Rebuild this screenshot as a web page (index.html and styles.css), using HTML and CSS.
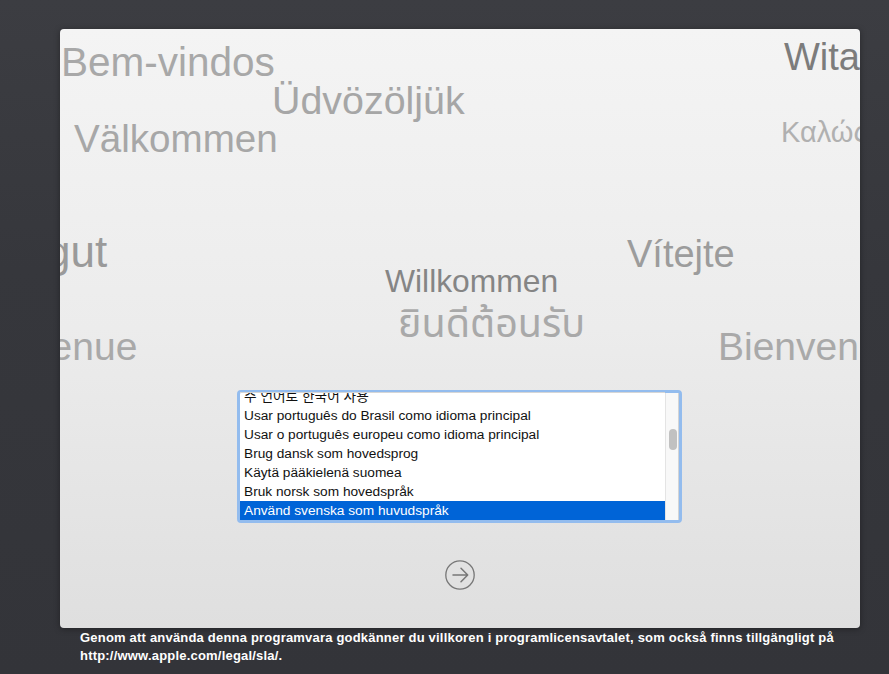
FILE: index.html
```html
<!DOCTYPE html>
<html lang="sv">
<head>
<meta charset="utf-8">
<title>Välkommen</title>
<link rel="stylesheet" href="styles.css">
</head>
<body>
<div class="screen">
  <main class="panel">
    <div class="greetings" aria-hidden="true">
      <span class="word w-bem">Bem-vindos</span>
      <span class="word w-udv">Üdvözöljük</span>
      <span class="word w-val">Välkommen</span>
      <span class="word w-wita">Wita</span>
      <span class="word w-kalo">Καλώς ορίσατε</span>
      <span class="word w-gut">gut</span>
      <span class="word w-bienL">Bienvenue</span>
      <span class="word w-vit">Vítejte</span>
      <span class="word w-bienR">Bienvenido</span>
      <span class="word w-will">Willkommen</span>
      <span class="word w-thai">ยินดีต้อนรับ</span>
    </div>

    <div class="listbox">
      <div class="list">
        <ul class="rows">
          <li class="row">주 언어로 한국어 사용</li>
          <li class="row">Usar português do Brasil como idioma principal</li>
          <li class="row">Usar o português europeu como idioma principal</li>
          <li class="row">Brug dansk som hovedsprog</li>
          <li class="row">Käytä pääkielenä suomea</li>
          <li class="row">Bruk norsk som hovedspråk</li>
          <li class="row selected">Använd svenska som huvudspråk</li>
        </ul>
      </div>
      <div class="scrollbar"><div class="thumb"></div></div>
    </div>

    <button class="next" type="button" aria-label="Fortsätt">
      <svg width="30" height="30" viewBox="0 0 30 30">
        <circle cx="15" cy="15" r="14.2" fill="none" stroke="#777" stroke-width="1.3"/>
        <path d="M8 15 H22.5 M16 8.3 L22.7 15 L16 21.7" fill="none" stroke="#777" stroke-width="1.5" stroke-linecap="round" stroke-linejoin="round"/>
      </svg>
    </button>
  </main>

  <p class="legal">Genom att använda denna programvara godkänner du villkoren i programlicensavtalet, som också finns tillgängligt på http://www.apple.com/legal/sla/.</p>
</div>
</body>
</html>
```

FILE: styles.css
```css
html, body {
  margin: 0;
  padding: 0;
}

body {
  width: 889px;
  height: 674px;
  overflow: hidden;
  background: linear-gradient(180deg, #3c3d42 0%, #36373c 40%, #333439 100%);
  font-family: "Liberation Sans", Arial, sans-serif;
}

.screen {
  padding: 29px 0 0 60px;
}

.panel {
  position: relative;
  width: 800px;
  height: 599px;
  box-sizing: border-box;
  border-radius: 4px;
  overflow: hidden;
  background: linear-gradient(180deg, #f4f4f4 0%, #ececec 50%, #dfdfdf 100%);
  box-shadow: 0 1px 6px rgba(0, 0, 0, 0.35);
  display: flex;
  flex-direction: column;
  align-items: center;
  padding-top: 361px;
}

/* free canvas of greetings */
.greetings {
  position: absolute;
  inset: 0;
}

.word {
  position: absolute;
  line-height: 1;
  white-space: nowrap;
  color: #aaaaaa;
  font-family: "Liberation Sans", Arial, sans-serif;
}

.w-bem   { left: 1px;    top: 13px;  font-size: 40.5px; color: #a8a8a8; }
.w-udv   { left: 212px;  top: 52px;  font-size: 39.4px; color: #a6a6a6; }
.w-val   { left: 14px;   top: 91px;  font-size: 38.6px; color: #a7a7a7; }
.w-wita  { left: 724px;  top: 9px;   font-size: 38px;   color: #7c7c7c; }
.w-kalo  { left: 721px;  top: 89px;  font-size: 29px;   color: #b0b0b0; }
.w-gut   { left: -14px;  top: 201px; font-size: 44px;   color: #9a9a9a; }
.w-bienL { left: -107px; top: 298px; font-size: 39px;   color: #a9a9a9; }
.w-vit   { left: 567px;  top: 206px; font-size: 38px;   color: #9c9c9c; }
.w-bienR { left: 658px;  top: 298px; font-size: 39px;   color: #a9a9a9; }
.w-will  { left: 325px;  top: 237px; font-size: 31.8px; color: #858585; }
.w-thai  {
  left: 338px;
  top: 281px;
  font-size: 39.5px;
  line-height: 0.8;
  color: #a9a9a9;
  font-family: "Noto Sans Thai", "Noto Sans", "DejaVu Sans", sans-serif;
}

/* language list */
.listbox {
  position: relative;
  display: flex;
  width: 445px;
  height: 133px;
  box-sizing: border-box;
  border: 3px solid #93bcee;
  border-radius: 4px;
  background: #ffffff;
  margin-left: -1px;
}

.list {
  flex: 1;
  overflow: hidden;
  border-top: 1px solid #d6d6d6;
  margin-top: -1px;
}

.rows {
  list-style: none;
  margin: -6px 0 0 0;
  padding: 0;
}

.row {
  height: 19px;
  line-height: 19px;
  padding-left: 4px;
  font-size: 13.7px;
  color: #111;
  white-space: nowrap;
  font-family: "Liberation Sans", Arial, "Noto Sans CJK KR", sans-serif;
}

.row.selected {
  background: #0064d7;
  color: #ffffff;
}

.scrollbar {
  width: 14px;
  box-sizing: border-box;
  background: #f8f8f8;
  border-left: 1px solid #e4e4e4;
  border-right: 1px solid #d4d4d4;
  padding: 36px 0 0 3px;
}

.thumb {
  width: 8px;
  height: 21px;
  border-radius: 4px;
  background: #c1c1c1;
}

.next {
  margin-top: 37px;
  width: 30px;
  height: 30px;
  padding: 0;
  border: 0;
  background: transparent;
  display: block;
}

.next svg {
  display: block;
}

.legal {
  margin: 1px 0 0 20px;
  width: 790px;
  font-size: 13px;
  letter-spacing: 0.2px;
  line-height: 18px;
  font-weight: bold;
  color: #ffffff;
}
```
